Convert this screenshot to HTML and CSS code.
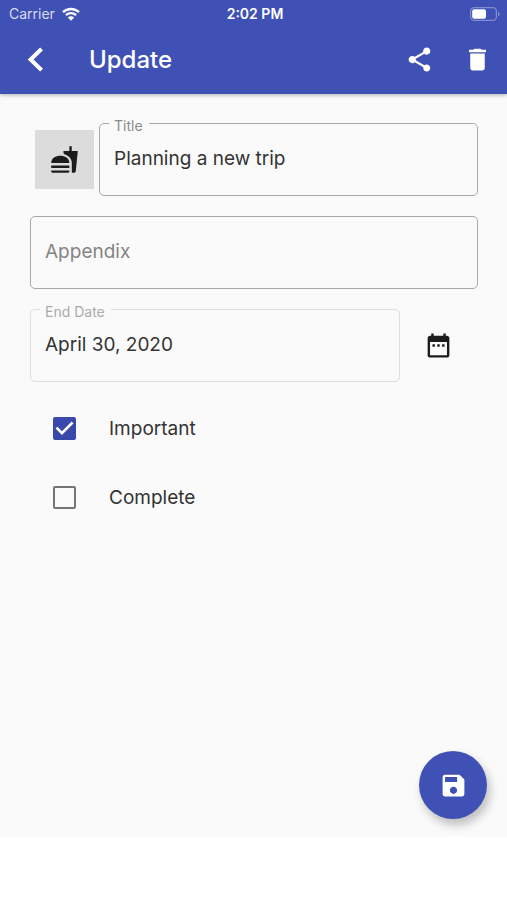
FILE: index.html
```html
<!DOCTYPE html>
<html lang="en">
<head>
<meta charset="utf-8">
<meta name="viewport" content="width=device-width, initial-scale=1">
<title>Update</title>
<link rel="stylesheet" href="styles.css">
</head>
<body>
<header class="header">
  <div class="status">
    <div class="carrier">
      <span>Carrier</span>
      <svg class="wifi" viewBox="0 0 18 14" aria-hidden="true">
        <path d="M1 5.2a11.6 11.6 0 0 1 16 0M3.9 8.2a7.5 7.5 0 0 1 10.2 0" fill="none" stroke="currentColor" stroke-width="2.3"/>
        <path d="M9 13.8 5.8 10.5a4.6 4.6 0 0 1 6.4 0z" fill="currentColor"/>
      </svg>
    </div>
    <span class="clock">2:02 PM</span>
    <div class="power">
      <svg class="battery" viewBox="0 0 31 14" aria-hidden="true">
        <rect x=".6" y=".6" width="25.8" height="12.8" rx="3.6" fill="none" stroke="currentColor" stroke-width="1.2" opacity=".35"/>
        <path d="M28 4.5a2.7 2.7 0 0 1 0 5z" fill="currentColor" opacity=".35"/>
        <rect x="2.2" y="2.2" width="13.8" height="9.6" rx="2" fill="currentColor"/>
      </svg>
    </div>
  </div>
  <nav class="bar">
    <button class="icon-button" type="button" aria-label="Back">
      <svg class="icon" viewBox="0 0 24 24"><path d="M17 3.2 8 12l9 8.8" fill="none" stroke="currentColor" stroke-width="3.4"/></svg>
    </button>
    <h1 class="title">Update</h1>
    <button class="icon-button" type="button" aria-label="Share">
      <svg class="icon" viewBox="0 0 24 24"><path fill="currentColor" d="M18 16.08c-.76 0-1.44.3-1.96.77L8.91 12.7c.05-.23.09-.46.09-.7s-.04-.47-.09-.7l7.05-4.11c.54.5 1.25.81 2.04.81 1.66 0 3-1.34 3-3s-1.34-3-3-3-3 1.34-3 3c0 .24.04.47.09.7L8.04 9.81C7.5 9.31 6.79 9 6 9c-1.66 0-3 1.34-3 3s1.34 3 3 3c.79 0 1.5-.31 2.04-.81l7.12 4.16c-.05.21-.08.43-.08.65 0 1.61 1.31 2.92 2.92 2.92s2.92-1.31 2.92-2.92-1.31-2.92-2.92-2.92z"/></svg>
    </button>
    <button class="icon-button" type="button" aria-label="Delete">
      <svg class="icon" viewBox="0 0 24 24"><path fill="currentColor" d="M6 19c0 1.1.9 2 2 2h8c1.1 0 2-.9 2-2V7H6v12zM19 4h-3.5l-1-1h-5l-1 1H5v2h14V4z"/></svg>
    </button>
  </nav>
</header>
<main class="main">
  <form class="form">
    <div class="row title-row">
      <button class="category" type="button" aria-label="Category">
        <svg class="icon" viewBox="0 0 24 24"><path fill="currentColor" d="M18.06 22.99h1.66c.84 0 1.53-.64 1.63-1.46L23 5.05h-5V1h-1.97v4.05h-4.97l.3 2.34c1.71.47 3.31 1.32 4.27 2.26 1.44 1.42 2.43 2.89 2.43 5.29v8.05zM1 21.99V21h15.03v.99c0 .55-.45 1-1.01 1H2.01c-.56 0-1.01-.45-1.01-1zm15.03-7c0-8-15.03-8-15.03 0h15.03zM1.02 17h15v2h-15z"/></svg>
      </button>
      <div class="field">
        <label class="field-label" for="title">Title</label>
        <input class="input" id="title" type="text" value="Planning a new trip">
      </div>
    </div>
    <div class="row">
      <div class="field">
        <input class="input" type="text" placeholder="Appendix" aria-label="Appendix">
      </div>
    </div>
    <div class="row">
      <div class="field field-quiet">
        <label class="field-label" for="date">End Date</label>
        <input class="input" id="date" type="text" value="April 30, 2020" readonly>
      </div>
      <button class="date-button" type="button" aria-label="Pick date">
        <svg class="icon" viewBox="0 0 24 24"><path fill="currentColor" d="M9 11H7v2h2v-2zm4 0h-2v2h2v-2zm4 0h-2v2h2v-2zm2-7h-1V2h-2v2H8V2H6v2H5c-1.11 0-1.99.9-1.99 2L3 20c0 1.1.89 2 2 2h14c1.1 0 2-.9 2-2V6c0-1.1-.9-2-2-2zm0 16H5V9h14v11z"/></svg>
      </button>
    </div>
    <div class="checks">
      <label class="check"><input class="box" type="checkbox" checked><span>Important</span></label>
      <label class="check"><input class="box" type="checkbox"><span>Complete</span></label>
    </div>
  </form>
  <button class="save" type="button" aria-label="Save">
    <svg class="icon" viewBox="0 0 24 24"><path fill="currentColor" d="M17 3H5c-1.11 0-2 .9-2 2v14c0 1.1.89 2 2 2h14c1.1 0 2-.9 2-2V7l-4-4zm-5 16c-1.66 0-3-1.34-3-3s1.34-3 3-3 3 1.34 3 3-1.34 3-3 3zm3-10H5V5h10v4z"/></svg>
  </button>
</main>
</body>
</html>
```
FILE: styles.css
```css
* {
  box-sizing: border-box;
}

body {
  margin: 0;
  min-height: 100vh;
  padding-bottom: 63px;
  display: flex;
  flex-direction: column;
  background: #fff;
  color: #333;
  font-family: Inter, "Liberation Sans", sans-serif;
  font-size: 19px;
  line-height: 24px;
}

button {
  display: flex;
  align-items: center;
  justify-content: center;
  padding: 0;
  border: 0;
  background: none;
  color: inherit;
}

.icon {
  width: 29px;
  height: 29px;
}

.header {
  position: relative;
  background: #3f51b5;
  color: #fff;
  box-shadow: 0 1px 4px rgba(0, 0, 0, 0.3);
}

.status {
  display: grid;
  grid-template-columns: 1fr auto 1fr;
  align-items: center;
  height: 27px;
  padding: 0 6px 0 9px;
  font-size: 14px;
  line-height: 16px;
}

.carrier {
  display: flex;
  align-items: center;
  gap: 7px;
  color: #d9dcf0;
}

.wifi {
  width: 18px;
  height: 14px;
  color: #fff;
}

.clock {
  font-weight: 600;
}

.power {
  display: flex;
  justify-content: flex-end;
}

.battery {
  width: 31px;
  height: 14px;
}

.bar {
  display: flex;
  align-items: center;
  height: 67px;
  padding-right: 1px;
  padding-bottom: 2px;
}

.icon-button {
  width: 58px;
  height: 58px;
}

.icon-button:first-child {
  width: 70px;
}

.title {
  flex: 1;
  margin: 0;
  padding-left: 19px;
  font-size: 24px;
  font-weight: 500;
  line-height: 30px;
}

.main {
  flex: 1;
  display: flex;
  flex-direction: column;
  justify-content: space-between;
  padding: 29px 29px 18px 30px;
  background: #fafafa;
}

.form {
  display: flex;
  flex-direction: column;
  gap: 20px;
}

.row {
  display: flex;
  align-items: center;
}

.title-row {
  gap: 5px;
  padding-left: 5px;
}

.category {
  width: 59px;
  height: 59px;
  background: #dcdcdc;
  color: #1c1c1c;
}

.field {
  position: relative;
  flex: 1;
}

.field-label {
  position: absolute;
  top: -6px;
  left: 10px;
  padding: 0 6px 0 5px;
  background: #fafafa;
  color: #8a8a8a;
  font-size: 14px;
  line-height: 18px;
}

.input {
  display: block;
  width: 100%;
  height: 73px;
  padding: 0 14px 2px;
  border: 1px solid #a8a8a8;
  border-radius: 5px;
  background: none;
  color: #333;
  font: inherit;
  outline: 0;
}

.input::placeholder {
  color: #848484;
  opacity: 1;
}

.field-quiet .input {
  border-color: #dedede;
}

.field-quiet .field-label {
  color: #ababab;
}

.date-button {
  width: 77px;
  height: 58px;
  margin-right: 1px;
  color: #1c1c1c;
}

.checks {
  display: flex;
  flex-direction: column;
  margin-top: -8px;
}

.check {
  display: flex;
  align-items: center;
  gap: 33px;
  height: 69px;
  padding-left: 23px;
}

.box {
  appearance: none;
  display: flex;
  width: 23px;
  height: 23px;
  margin: 0;
  border: 2px solid #757575;
  border-radius: 2px;
}

.box:checked {
  border: 0;
  background: #3949ab;
}

.box:checked::after {
  content: "";
  flex: 1;
  background: #fff;
  clip-path: polygon(11% 50%, 19% 42%, 39% 62%, 81% 20%, 89% 28%, 39% 78%);
}

.save {
  align-self: flex-end;
  width: 68px;
  height: 68px;
  margin-right: -9px;
  border-radius: 50%;
  background: #3f51b5;
  color: #fff;
  box-shadow: 3px 6px 10px rgba(0, 0, 0, 0.24);
}
```
